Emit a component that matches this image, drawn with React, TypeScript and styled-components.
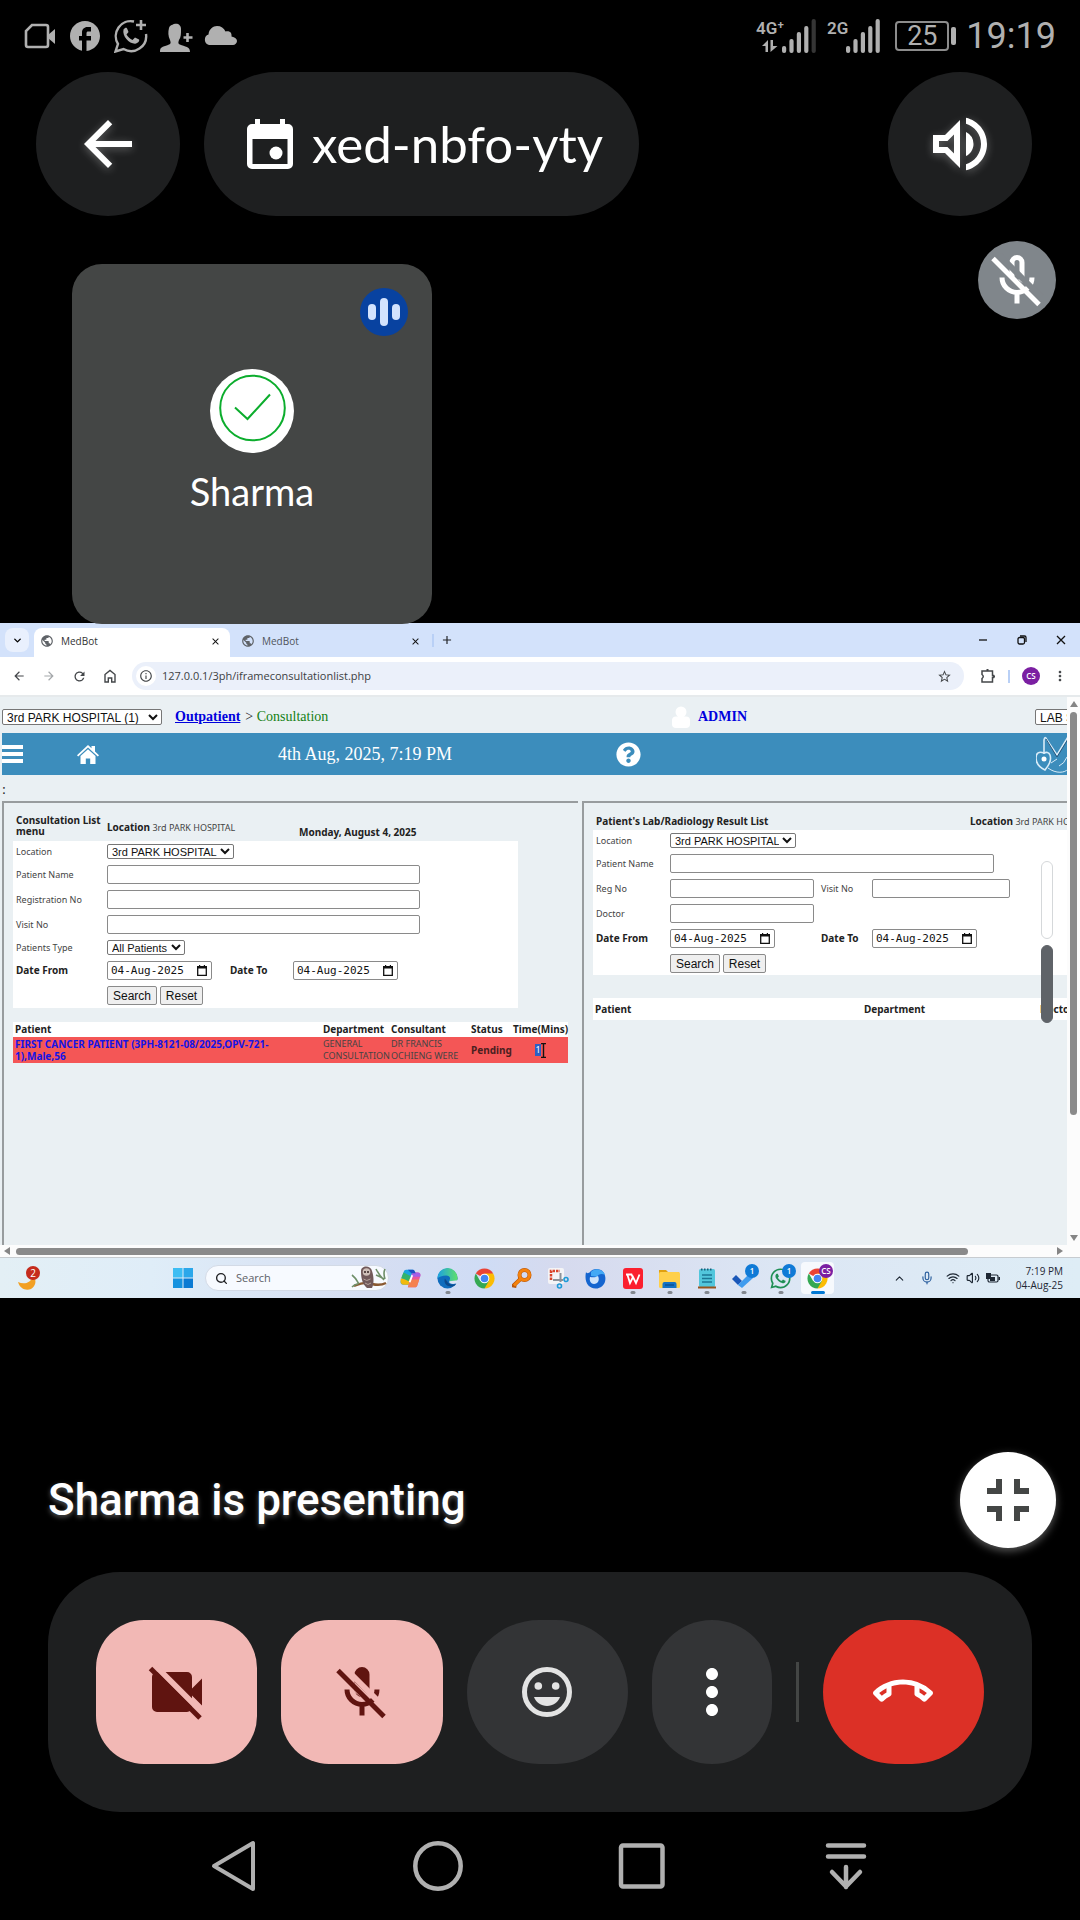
import React from "react";
import styled, { createGlobalStyle } from "styled-components";
import {
  MdArrowBack,
  MdOutlineVolumeUp,
  MdFullscreenExit,
  MdMoreVert,
  MdOutlineCallEnd,
  MdFacebook,
  MdPublic,
  MdClose,
  MdAdd,
  MdRefresh,
  MdArrowForward,
  MdInfoOutline,
  MdStarBorder,
} from "react-icons/md";
import { FaWhatsapp, FaQuestionCircle } from "react-icons/fa";
import { ChevronDown, ChevronUp, Mic, Wifi, Volume2, Search as SearchIcon } from "lucide-react";

const googleSans = `"Google Sans", Lato, "Open Sans", sans-serif`;
const segoe = `"Segoe UI", "Open Sans", "Noto Sans", sans-serif`;
const tahoma = `Tahoma, "Noto Sans", sans-serif`;
const arial = `"Liberation Sans", Arial, sans-serif`;
const times = `"Liberation Serif", "Times New Roman", serif`;

const GlobalStyle = createGlobalStyle`
  * { box-sizing: border-box; }
  body { margin: 0; background: #000; }
  button, input, select { font: inherit; margin: 0; }
  svg { display: block; flex: none; }
`;

const Phone = styled.main`
  min-height: 100vh;
  display: flex;
  flex-direction: column;
  background: #000;
  color: #fff;
  font-family: ${googleSans};
  overflow: hidden;
`;

/* ---------- status bar ---------- */

const StatusBar = styled.header`
  height: 72px;
  padding: 0 24px;
  display: flex;
  align-items: center;
  justify-content: space-between;
  color: #b0b0b0;
  font-family: Roboto, sans-serif;
`;

const StatusGroup = styled.div<{ $gap: number }>`
  display: flex;
  align-items: center;
  gap: ${(p) => p.$gap}px;
`;

const Battery = styled.span`
  width: 54px;
  height: 30px;
  margin-left: 4px;
  border: 2px solid #8c8c8c;
  border-radius: 4px;
  display: grid;
  place-items: center;
  font-size: 27px;
  line-height: 27px;
`;

const BatteryTip = styled.span`
  width: 5px;
  height: 18px;
  border-radius: 2px;
  background: #b0b0b0;
`;

const Clock = styled.time`
  font-size: 36px;
  line-height: 40px;
  margin-left: 8px;
`;

const SignalIcon = ({ label, data, bars }: { label: string; data?: boolean; bars: number }) => (
  <svg width={data ? 60 : 53} height="34" viewBox={data ? "0 0 60 34" : "0 0 53 34"} fill="currentColor">
    <text x="0" y="15" fontFamily="Roboto, sans-serif" fontWeight="600" fontSize="17">{label}</text>
    {[0, 1, 2, 3, 4].map((i) => {
      const h = [7, 14, 21, 27, 34][i];
      return (
        <rect key={i} x={(data ? 26 : 19) + i * 7.4} y={34 - h} width="4.2" height={h} rx="2" opacity={i < bars ? 1 : 0.3} />
      );
    })}
    {data && <path d="M6 27 12 21v12H9.500V27zM14.500 21v12l7-6h-4.500v-6z" />}
  </svg>
);

/* ---------- meeting header ---------- */

const MeetingHeader = styled.div`
  display: flex;
  gap: 24px;
  padding: 0 48px 0 36px;
`;

const RoundButton = styled.button`
  width: 144px;
  height: 144px;
  border: 0;
  border-radius: 72px;
  background: #1e1f20;
  color: #fff;
  display: grid;
  place-items: center;
  padding: 0;
  svg { filter: drop-shadow(0 2px 4px rgba(255, 255, 255, 0.3)); }
`;

const MeetingCode = styled.button`
  height: 144px;
  padding: 0 36px;
  border: 0;
  border-radius: 72px;
  background: #1e1f20;
  color: #fff;
  display: flex;
  align-items: center;
  gap: 12px;
  font-size: 51px;
  line-height: 56px;
`;

const Grow = styled.div`
  flex: 1;
`;

/* ---------- participants ---------- */

const Participants = styled.section`
  display: flex;
  justify-content: space-between;
  align-items: flex-start;
  padding: 25px 24px 0 72px;
`;

const Tile = styled.article`
  position: relative;
  z-index: 1;
  width: 360px;
  height: 360px;
  margin: 23px 0 -1px;
  border-radius: 30px;
  background: #444645;
  display: flex;
  flex-direction: column;
  align-items: center;
  padding-top: 105px;
`;

const SpeakingBadge = styled.span`
  position: absolute;
  top: 24px;
  right: 24px;
  width: 48px;
  height: 48px;
  border-radius: 50%;
  background: #0842a0;
  display: flex;
  align-items: center;
  justify-content: center;
  gap: 4px;
`;

const SpeakingBar = styled.i<{ $tall?: boolean }>`
  width: 8px;
  height: ${(p) => (p.$tall ? 28 : 16)}px;
  border-radius: 4px;
  background: #d3e3fd;
`;

const TileName = styled.span`
  margin-top: 16px;
  font-size: 38px;
  line-height: 44px;
`;

const MutedBadge = styled.span`
  width: 78px;
  height: 78px;
  border-radius: 50%;
  background: #80868b;
  display: grid;
  place-items: center;
`;

/* ---------- shared desktop ---------- */

const Desktop = styled.section`
  position: relative;
  background: #fff;
  color: #202124;
  font-family: ${segoe};
`;

const TabStrip = styled.div`
  height: 34px;
  padding: 5px 14px 0 5px;
  background: #d3e2fb;
  display: flex;
  align-items: stretch;
`;

const TabSearch = styled.button`
  width: 24px;
  height: 24px;
  border: 0;
  border-radius: 8px;
  background: #e9f0fd;
  padding: 0;
  margin-right: 5px;
  display: grid;
  place-items: center;
`;

const Tab = styled.div<{ $active?: boolean }>`
  width: ${(p) => (p.$active ? 196 : 200)}px;
  padding: 0 9px 3px ${(p) => (p.$active ? 6 : 11)}px;
  border-radius: 8px 8px 0 0;
  background: ${(p) => (p.$active ? "#fff" : "transparent")};
  color: ${(p) => (p.$active ? "#333" : "#50555c")};
  display: flex;
  align-items: center;
  gap: 7px;
  font-size: 10px;
  line-height: 14px;
`;

const TabTitle = styled.span`
  flex: 1;
`;

const PlainButton = styled.button`
  border: 0;
  background: none;
  color: inherit;
  padding: 0;
  display: grid;
  place-items: center;
`;

const Separator = styled.i<{ $m: number }>`
  width: 2px;
  height: 13px;
  margin: 0 ${(p) => p.$m}px;
  align-self: center;
  background: #b9d0f6;
`;

const WindowButtons = styled.div`
  display: flex;
  align-items: center;
  gap: 29px;
  margin-left: auto;
  padding-bottom: 6px;
`;

const TabActions = styled.div`
  display: flex;
  align-items: center;
  gap: 6px;
  padding: 0 0 5px 2px;
`;

const Toolbar = styled.div`
  height: 40px;
  padding: 0 12px;
  display: flex;
  align-items: center;
  border-bottom: 2px solid #e6eaec;
  color: #44474a;
`;

const NavButtons = styled.div`
  display: flex;
  gap: 16px;
  margin-right: 15px;
`;

const Omnibox = styled.div`
  flex: 1;
  height: 28px;
  border-radius: 14px;
  background: #ebf0fa;
  display: flex;
  align-items: center;
  padding: 0 12px 0 4px;
  gap: 6px;
`;

const SiteInfo = styled.span`
  width: 20px;
  height: 20px;
  border-radius: 50%;
  background: #fff;
  display: grid;
  place-items: center;
`;

const UrlInput = styled.input`
  flex: 1;
  min-width: 0;
  border: 0;
  padding: 0;
  background: none;
  font-size: 11px;
  line-height: 16px;
  color: #3c4043;
`;

const ToolbarEnd = styled.div`
  display: flex;
  align-items: center;
  padding-left: 16px;
`;

const Profile = styled.span`
  width: 18px;
  height: 18px;
  border-radius: 50%;
  background: #7b1fa2;
  color: #fff;
  display: grid;
  place-items: center;
  font-size: 8px;
  line-height: 8px;
  font-weight: 600;
  margin-right: 12px;
`;

/* ---------- hospital page ---------- */

const Viewport = styled.div`
  display: flex;
  height: 548px;
`;

const Page = styled.div`
  flex: 1;
  min-width: 0;
  overflow: hidden;
  background: #eaf0f3;
  padding-left: 2px;
  display: flex;
  flex-direction: column;
`;

const PageTop = styled.div`
  height: 36px;
  padding-top: 4px;
  display: flex;
  align-items: center;
  font-family: ${times};
  font-size: 14px;
  line-height: 16px;
  white-space: nowrap;
  a { color: #00d; font-weight: 700; }
`;

const Crumb = styled.span`
  color: #148014;
`;

const BarStart = styled.div<{ $w: number }>`
  flex: 0 0 ${(p) => p.$w}px;
  display: flex;
  align-items: center;
`;

const Spacer = styled.i<{ $w: number }>`
  width: ${(p) => p.$w}px;
  flex: none;
`;

const AdminLink = styled.a`
  width: 337px;
  flex: none;
  text-decoration: none;
`;

const LogoSlot = styled.span`
  flex: none;
  padding-left: 395px;
`;

const Field = styled.select<{ $w: number; $large?: boolean }>`
  width: ${(p) => p.$w}px;
  flex: none;
  height: ${(p) => (p.$large ? 16 : 15)}px;
  border: 1px solid #767676;
  border-radius: 2px;
  background: #fff;
  color: #111;
  padding: 0;
  font-family: ${arial};
  font-size: ${(p) => (p.$large ? 12 : 11)}px;
  line-height: 13px;
`;

const BlueBar = styled.nav`
  height: 42px;
  background: #3c8dbc;
  color: #fff;
  display: flex;
  align-items: center;
  font-family: ${times};
  font-size: 18px;
  line-height: 20px;
  overflow: hidden;
`;

const BarDate = styled.span`
  margin-left: 179px;
  white-space: nowrap;
`;

const Burger = styled.button`
  width: 21px;
  height: 18px;
  padding: 0;
  border: 0;
  border-top: 4px solid #fff;
  border-bottom: 4px solid #fff;
  background: linear-gradient(#fff, #fff) center / 100% 4px no-repeat;
  margin-right: 54px;
`;

const Colon = styled.p`
  margin: 0;
  height: 26px;
  padding-top: 7px;
  font: 14px/16px ${times};
`;

const Frames = styled.div`
  flex: 1;
  display: flex;
  gap: 4px;
  min-height: 0;
`;

const Frame = styled.section<{ $basis: string }>`
  flex: ${(p) => p.$basis};
  min-width: 0;
  overflow: hidden;
  border-top: 2px solid #989c9e;
  border-left: 2px solid #989c9e;
  padding-left: 9px;
  font-family: ${tahoma};
  font-size: 9px;
  line-height: 11px;
  color: #444;
  b, th { font-size: 10px; color: #222; }
`;

const FrameHead = styled.div<{ $h: number }>`
  height: ${(p) => p.$h}px;
  display: flex;
  align-items: flex-end;
  padding: 0 0 2px 3px;
  white-space: nowrap;
`;

const HeadCell = styled.div<{ $w?: number; $lift?: number }>`
  width: ${(p) => (p.$w ? p.$w + "px" : "auto")};
  flex: none;
  padding-bottom: ${(p) => p.$lift ?? 0}px;
`;

const Form = styled.form<{ $cols: string; $maxed?: boolean }>`
  background: #fff;
  display: grid;
  grid-template-columns: ${(p) => p.$cols};
  gap: 6px 0;
  align-items: center;
  padding: 3px 0 ${(p) => (p.$maxed ? 3 : 2)}px 3px;
  margin-right: ${(p) => (p.$maxed ? 60 : 0)}px;
`;

const Label = styled.label<{ $bold?: boolean }>`
  font-weight: ${(p) => (p.$bold ? 700 : 400)};
  font-size: ${(p) => (p.$bold ? 10 : 9)}px;
  color: ${(p) => (p.$bold ? "#222" : "#444")};
  white-space: nowrap;
`;

const Text = styled.input<{ $w: number; $span?: boolean }>`
  width: ${(p) => p.$w}px;
  height: 19px;
  border: 1px solid #8a8a8a;
  border-radius: 2px;
  background: #fff;
  padding: 0 4px;
  grid-column: ${(p) => (p.$span ? "2 / -1" : "auto")};
`;

const SelectCell = styled.div`
  grid-column: 2 / -1;
  display: flex;
  gap: 3px;
`;

const DateBox = styled.span`
  width: 105px;
  height: 19px;
  border: 1px solid #8a8a8a;
  border-radius: 2px;
  background: #fff;
  display: flex;
  align-items: center;
  padding: 0 4px 0 3px;
  color: #111;
`;

const DateInput = styled.input`
  flex: 1;
  min-width: 0;
  border: 0;
  padding: 0;
  background: none;
  font-family: "DejaVu Sans Mono", monospace;
  font-size: 11px;
  line-height: 15px;
  color: #111;
`;

const FormButton = styled.button<{ $w: number }>`
  width: ${(p) => p.$w}px;
  height: 19px;
  border: 1px solid #8a8a8a;
  border-radius: 2px;
  background: #efefef;
  color: #111;
  padding: 0;
  font-family: ${arial};
  font-size: 12px;
  line-height: 16px;
`;

const DataTable = styled.table<{ $w: string; $top: number; $head: number }>`
  width: ${(p) => p.$w};
  margin-top: ${(p) => p.$top}px;
  border-collapse: collapse;
  table-layout: fixed;
  text-align: left;
  white-space: nowrap;
  th, td { padding: 0 0 0 2px; }
  thead tr { height: ${(p) => p.$head}px; background: #fff; }
`;

const PatientRow = styled.tr`
  height: 26px;
  background: #f45656;
  line-height: 12px;
  b { color: #4a2020; }
`;

const PatientCell = styled.td`
  font-weight: 700;
  font-size: 10px;
  a { color: #1414e6; text-decoration: none; }
`;

const Minutes = styled.div`
  display: flex;
  justify-content: center;
  align-items: center;
  span { background: #2c5fc4; color: #fff; }
`;

const VerticalScroll = styled.div`
  width: 13px;
  background: #fcfcfc;
  display: flex;
  flex-direction: column;
  align-items: center;
  padding: 3px 0;
`;

const VerticalThumb = styled.div`
  width: 7px;
  height: 403px;
  margin: 4px 0 auto;
  border-radius: 4px;
  background: #8a8a8a;
`;

const HorizontalScroll = styled.div`
  height: 13px;
  display: flex;
  align-items: center;
  padding: 0 16px 0 3px;
  border-bottom: 1px solid #c7ccd0;
  background: #fcfcfc;
`;

const HorizontalTrack = styled.div`
  flex: 1;
  margin: 0 0 0 5px;
`;

const HorizontalThumb = styled.div`
  width: 91.5%;
  height: 7px;
  border-radius: 4px;
  background: #8a8a8a;
`;

const SideSliders = styled.div`
  position: absolute;
  top: 238px;
  right: 27px;
  display: grid;
  gap: 6px;
`;

const SidePill = styled.i<{ $filled?: boolean }>`
  width: 12px;
  height: 78px;
  border-radius: 6px;
  border: 1px solid ${(p) => (p.$filled ? "#5f6368" : "#d5d8da")};
  background: ${(p) => (p.$filled ? "#5f6368" : "#fff")};
`;

/* ---------- taskbar ---------- */

const Taskbar = styled.footer`
  height: 40px;
  display: flex;
  align-items: center;
  padding: 0 17px;
  background: linear-gradient(90deg, #e3eff5 0%, #dfedf8 14%, #d6def2 34%, #cfdcf5 45%, #d6daee 52%, #dce6f4 72%, #deedf6 100%);
`;

const Weather = styled.div`
  flex: 0 0 156px;
`;

const StartButton = styled(PlainButton)`
  width: 20px;
  height: 20px;
  margin-right: 12px;
`;

const SearchBox = styled.label`
  width: 184px;
  height: 26px;
  border: 1px solid #d3dae6;
  border-radius: 13px;
  background: #f7faff;
  display: flex;
  align-items: center;
  gap: 8px;
  padding: 0 1px 0 9px;
  input {
    flex: 1;
    min-width: 0;
    border: 0;
    padding: 0;
    background: none;
    font-size: 11px;
    line-height: 16px;
    &::placeholder { color: #5c6066; opacity: 1; }
  }
`;

const Apps = styled.div`
  display: flex;
  padding-left: 3px;
`;

const AppButton = styled.button<{ $active?: boolean; $running?: boolean }>`
  position: relative;
  width: 33px;
  margin: 0 2px;
  height: 32px;
  padding: 0;
  border: 0;
  border-radius: 4px;
  background: ${(p) => (p.$active ? "#f6f9fd" : "none")};
  display: grid;
  place-items: center;
  &::after {
    content: "";
    position: absolute;
    bottom: 0;
    left: 50%;
    width: ${(p) => (p.$active ? 14 : 5)}px;
    height: 3px;
    border-radius: 2px;
    transform: translateX(-50%);
    background: ${(p) => (p.$active ? "#0078d4" : p.$running ? "#82878f" : "transparent")};
  }
`;

const Count = styled.span<{ $color: string }>`
  position: absolute;
  top: 2px;
  right: 1px;
  width: 14px;
  height: 14px;
  border-radius: 50%;
  background: ${(p) => p.$color};
  color: #fff;
  display: grid;
  place-items: center;
  font-size: 8px;
  line-height: 10px;
  font-weight: 600;
`;

const Tray = styled.div`
  flex: 1 1 0;
  display: flex;
  justify-content: flex-end;
  align-items: center;
  color: #1d2733;
`;

const TrayIcons = styled.div`
  display: flex;
  align-items: center;
  gap: 6px;
  margin: 0 16px 0 14px;
`;

const TrayTime = styled.div`
  width: 47px;
  text-align: right;
  white-space: nowrap;
  font-size: 10px;
  line-height: 14px;
  display: grid;
  justify-content: end;
`;

/* ---------- call controls ---------- */

const Presenting = styled.div`
  display: flex;
  align-items: center;
  justify-content: space-between;
  margin: 154px 24px 24px 48px;
  font-family: Roboto, sans-serif;
  font-size: 44px;
  line-height: 52px;
  font-weight: 500;
  text-shadow: 0 2px 5px rgba(255, 255, 255, 0.35);
`;

const Minimise = styled.button`
  width: 96px;
  height: 96px;
  border: 0;
  border-radius: 50%;
  padding: 0;
  background: #fff;
  color: #444645;
  display: grid;
  place-items: center;
  box-shadow: 0 3px 8px rgba(255, 255, 255, 0.35);
`;

const Controls = styled.div`
  height: 240px;
  margin: 0 48px;
  padding: 48px;
  border-radius: 72px;
  background: #1e1f20;
  display: flex;
  align-items: center;
  gap: 24px;
`;

const Control = styled.button<{ $bg: string; $fg: string; $r: number; $w?: number }>`
  flex: ${(p) => (p.$w ? `0 0 ${p.$w}px` : "1 1 0")};
  height: 144px;
  padding: 0;
  border: 0;
  border-radius: ${(p) => p.$r}px;
  background: ${(p) => p.$bg};
  color: ${(p) => p.$fg};
  display: grid;
  place-items: center;
`;

const Rule = styled.i`
  width: 3px;
  height: 60px;
  background: #444645;
`;

const SystemNav = styled.nav`
  height: 108px;
  display: flex;
  justify-content: center;
  align-items: center;
`;

const SystemButton = styled(PlainButton)`
  width: 204px;
  height: 72px;
`;

/* ---------- drawings ---------- */

const CalendarIcon = () => (
  <svg width="60" height="60" viewBox="0 0 60 60" fill="#fff">
    <path
      fillRule="evenodd"
      d="M15 5h5v5h20V5h5v5h3a5 5 0 0 1 5 5v35a5 5 0 0 1-5 5H12a5 5 0 0 1-5-5V15a5 5 0 0 1 5-5h3zM12.500 25v25h35V25z"
    />
    <circle cx="36" cy="39" r="6.500" />
  </svg>
);

const CheckAvatar = () => (
  <svg width="84" height="84" viewBox="0 0 84 84">
    <circle cx="42" cy="42" r="42" fill="#fff" />
    <g fill="none" stroke="#0cad2d" strokeWidth="2">
      <circle cx="42.500" cy="39" r="32.300" />
      <path d="M25 38.500 37.500 50 60 25.500" />
    </g>
  </svg>
);

const MicOff = ({ filled, gap }: { filled?: boolean; gap: string }) => (
  <svg width="60" height="60" viewBox="0 0 60 60" fill="none" stroke="currentColor" strokeWidth="5">
    {filled ? (
      <path d="M22.500 12.500a7.500 7.500 0 0 1 15 0v15a7.500 7.500 0 0 1-15 0z" fill="currentColor" stroke="none" />
    ) : (
      <path d="M25 12.500a5 5 0 0 1 10 0v15a5 5 0 0 1-10 0z" />
    )}
    <path d="M15 27.500a15 15 0 0 0 30 0M30 42.500v11" />
    {filled ? (
      <path d="M22.500 20v10l10 8 5-4z" fill={gap} stroke="none" />
    ) : (
      <path d="M21 22v12l12 5 4-5z" fill={gap} stroke="none" />
    )}
    <path d="M12 5 54 47" stroke={gap} strokeWidth="6" />
    <path d="M6 8.500 52 54.500" />
  </svg>
);

const CameraOff = ({ gap }: { gap: string }) => (
  <svg width="60" height="60" viewBox="0 0 60 60">
    <path d="M10 10h30a5 5 0 0 1 5 5v11.500L55 16.500v27l-10-10V45a5 5 0 0 1-5 5H10a5 5 0 0 1-5-5V15a5 5 0 0 1 5-5z" fill="currentColor" />
    <path d="M8 3.500 60 55.500" stroke={gap} strokeWidth="6" />
    <path d="M3.500 6.500 53 56" stroke="currentColor" strokeWidth="5" />
  </svg>
);

const Smile = () => (
  <svg width="60" height="60" viewBox="0 0 60 60" fill="currentColor">
    <circle cx="30" cy="30" r="22.500" fill="none" stroke="currentColor" strokeWidth="5" />
    <circle cx="21.300" cy="24" r="3.800" />
    <circle cx="38.700" cy="24" r="3.800" />
    <path d="M17 35h26c-2 5.500-7 9-13 9s-11-3.500-13-9z" />
  </svg>
);

const StatusCamera = () => (
  <svg width="32" height="32" viewBox="0 0 32 32">
    <path d="M8 5h14a2 2 0 0 1 2 2v18a2 2 0 0 1-2 2H4a2 2 0 0 1-2-2V11z" fill="none" stroke="currentColor" strokeWidth="2.600" />
    <path d="m24 15 7-6v15l-7-6z" fill="currentColor" />
  </svg>
);

const StatusWhatsapp = () => (
  <svg width="34" height="34" viewBox="0 0 34 34" fill="none" stroke="currentColor" strokeWidth="2.400">
    <path d="M20 2.500A15 15 0 0 0 4 25L1.500 32.500 9.500 30A15 15 0 0 0 32 15" />
    <path d="M27 1v10M22 6h10" strokeWidth="2.600" />
    <path d="M9.500 10.500c2-2.500 3.500-2 4 0l1 2.500-2 2.500c1.500 2.500 3.500 4.500 6 5.500l2.500-2.500 4 2c1 1-1 4-4 4.200-6 0-13-7.500-11.500-14.200z" fill="currentColor" stroke="none" />
  </svg>
);

const StatusPerson = () => (
  <svg width="34" height="34" viewBox="0 0 34 34" fill="currentColor">
    <path d="M1 33c0-5 2-5 8-7 3-1 3-2 2-5-2-4-2-8-1-12 1-3 3-3 5-4 4-1 7 1 7 5 0 5 0 8-2 11-1 3-1 4 2 5 7 2 9 3 9 7z" />
    <path d="M28.500 14v9M24.500 18.500h9" stroke="currentColor" strokeWidth="2.600" />
  </svg>
);

const StatusCloud = () => (
  <svg width="34" height="34" viewBox="0 0 34 34" fill="currentColor">
    <path d="M5 26a5.500 5.500 0 0 1-.500-10.500C5 10 9 7 13 7c4 0 7 2 8.500 5.500C26 11.500 28 14 27.500 17.500 31 18 33 20 33 22s-2 4-4 4z" />
  </svg>
);

const HouseIcon = () => (
  <svg width="22" height="19" viewBox="0 0 22 19" fill="#fff">
    <path d="M11 0 14.500 3.300V1H18v5.500l4 3.700-1.200 1.300L11 2.600 1.200 11.500 0 10.200z" />
    <path d="M11 4.300 18.500 11v8h-5.300v-5.500H8.800V19H3.500v-8z" />
  </svg>
);

const PersonIcon = () => (
  <svg width="18" height="22" viewBox="0 0 18 22" fill="#fff">
    <circle cx="9" cy="6" r="5.500" />
    <rect y="10.500" width="18" height="11.500" rx="4" />
  </svg>
);

const StethoscopeLogo = () => (
  <svg width="60" height="38" viewBox="0 0 60 38" fill="none" stroke="#d9ecf8" strokeWidth="1.600">
    <path d="M8 19V5q1-5 3 0l10 15L32 2q2-2 3 1v18" />
    <path d="M8 18c-5-2-8 0-8 5 0 6 5 10 9 12 3-4 7-9 5-15-1-3-4-3-6-2z" />
    <path d="M12 33c8 6 17 5 20 1M15 28l6-4M31 22q-3 7-8 9" strokeWidth="1" />
    <circle cx="8" cy="24" r="2.500" fill="#fff" stroke="none" />
    <path d="M10 4 21 22 32 4" stroke="#27567c" strokeWidth="1" />
  </svg>
);

const Globe = () => <MdPublic size={14} color="#5f6368" />;

const ChromeLogo = () => (
  <svg width="21" height="21" viewBox="0 0 48 48">
    <path d="M24 24 4.100 12.500A23 23 0 0 1 43.900 12.500z" fill="#ea4335" />
    <path d="M24 24V12.500h19.900A23 23 0 0 1 24 47z" fill="#fbbc04" />
    <path d="M24 24 34 29.700 24 47A23 23 0 0 1 4.100 12.500L14 29.700z" fill="#34a853" />
    <circle cx="24" cy="24" r="11" fill="#fff" />
    <circle cx="24" cy="24" r="8.700" fill="#4285f4" />
  </svg>
);

const EdgeLogo = () => (
  <svg width="21" height="21" viewBox="0 0 24 24">
    <defs>
      <linearGradient id="edgeTop" x1="0" x2="1">
        <stop offset="0" stopColor="#1ba0e2" />
        <stop offset="1" stopColor="#5fe06a" />
      </linearGradient>
    </defs>
    <circle cx="12" cy="12" r="11.500" fill="#0f6cbd" />
    <path d="M.500 12A11.500 11.500 0 0 1 23.500 11c0 4-3 5.500-6 5.500-3 0-4-1.500-3-3 1.500-3-1-5-4-5C6 8.500 2 10 .500 12z" fill="url(#edgeTop)" />
    <path d="M9 12c-2 6 3 10 9 9 2-.500 3.500-2 4-3-4 2-9 1-10.500-3z" fill="#0b4a8c" />
    <path d="M14 15c-1 3 4 4 8.500 2.500L24 14z" fill="#dbe4f4" />
  </svg>
);

const CopilotLogo = () => (
  <svg width="21" height="21" viewBox="0 0 24 24">
    <path d="M7 2h8l-5 17H4c-3 0-4-2-3-5L4 5c.500-2 1.500-3 3-3z" fill="#1aa3e0" />
    <path d="M1 12h11l-2 7H4c-3 0-4-3-3-7z" fill="#f2b90c" />
    <path d="M1.500 11 4 5l8 4-2 6z" fill="#33b36b" />
    <path d="M14 5h6c3 0 4 2 3 5l-3 9c-.500 2-1.500 3-3 3H9z" fill="#e9569c" />
    <path d="M9 22 12 13h10l-2 6c-.500 2-1.500 3-3 3z" fill="#f5824f" />
    <path d="M14 5h6c3 0 4 2 3 5h-10z" fill="#a45ee6" />
    <path d="M9 2h6c2 0 2 3 3 4h-5z" fill="#1c4fc4" />
    <path d="m13 8-3 8 2 .500 3-8z" fill="#fff" />
  </svg>
);

const KeyLogo = () => (
  <svg width="20" height="20" viewBox="0 0 20 20" fill="none">
    <path d="M9 10.500 1.500 17.500l3 .500" stroke="#b9560a" strokeWidth="4" />
    <circle cx="12.500" cy="7" r="5" stroke="#b9560a" strokeWidth="4" />
    <path d="M9 10.500 2 17.500" stroke="#f5820c" strokeWidth="3" />
    <circle cx="12.500" cy="7" r="5" stroke="#f5820c" strokeWidth="3" />
  </svg>
);

const SnipLogo = () => (
  <svg width="21" height="21" viewBox="0 0 21 21" fill="none">
    <rect width="16" height="16" rx="2" fill="#f4f4f6" />
    <path d="M3 12V3h9" stroke="#d9442a" strokeWidth="2.500" strokeDasharray="2.500 1" />
    <path d="M12.500 5v9M5 12h10" stroke="#8d9299" strokeWidth="2" />
    <circle cx="11.500" cy="18" r="2" stroke="#1d9bd8" strokeWidth="1.600" />
    <circle cx="18" cy="11.500" r="2" stroke="#1d9bd8" strokeWidth="1.600" />
  </svg>
);

const BirdLogo = () => (
  <svg width="21" height="21" viewBox="0 0 21 21">
    <path d="M1 4c1 2 3 1 4 0 3-4 11-4 14 1 4 8-1 15.500-8.500 15.500S-1 14 1 4z" fill="#1565cf" />
    <path d="M6 4c4-5 12-3 14 3-3-2-7-1-8 2-1 0-3-1-6-1z" fill="#43a9f5" />
    <path d="M5 9c2 0 5 1 8-1 2 4 0 8-4 8-3 0-5-3-4-7z" fill="#cfe4fb" />
  </svg>
);

const WpsLogo = () => (
  <svg width="20" height="21" viewBox="0 0 20 21">
    <rect width="20" height="21" rx="3" fill="#fb1f2e" />
    <path d="M3 6.500h5.500L10 10M4.500 7 7 15l3-6 3 6 3.500-8.500" fill="none" stroke="#fff" strokeWidth="1.800" />
  </svg>
);

const FolderLogo = () => (
  <svg width="21" height="21" viewBox="0 0 21 21">
    <path d="M0 2h7l2 2h11v4H0z" fill="#e0a010" />
    <rect y="4" width="21" height="16" rx="1.500" fill="#ffd04c" />
    <path d="M3.500 20v-4q0-2 2-2h10q2 0 2 2v4z" fill="#1372c4" />
    <path d="M6 17h9" stroke="#0b4f91" strokeWidth="1.400" />
  </svg>
);

const NotepadLogo = () => (
  <svg width="18" height="21" viewBox="0 0 18 21">
    <rect x="1" y="1" width="16" height="18" rx="1.500" fill="#52c6dc" />
    <path d="M3 1.500h12" stroke="#1b5d78" strokeWidth="2" strokeDasharray="1.500 1.500" />
    <path d="M4 7h10M4 10.500h10M4 14h10" stroke="#1c7795" strokeWidth="1.400" />
    <rect y="18.500" width="18" height="2" fill="#97551f" />
  </svg>
);

const TodoLogo = () => (
  <svg width="24" height="21" viewBox="0 0 24 21">
    <path d="m0 11 4-4 6 6-4 4z" fill="#1a57b8" />
    <path d="m6 17 11-11 4 4L10 20z" fill="#3f9bee" />
  </svg>
);

const MoonLogo = () => (
  <svg width="24" height="26" viewBox="0 0 24 26">
    <path d="M1 17c6 3 13 1 15-6 4 4 3 10-2 13-5 2-11 0-13-7z" fill="#f2a024" />
    <circle cx="16" cy="8" r="7" fill="#c52b1c" />
    <text x="16" y="11.500" textAnchor="middle" fontSize="10" fill="#fff" fontFamily="Open Sans, sans-serif">2</text>
  </svg>
);

const WindowsLogo = () => (
  <svg width="20" height="20" viewBox="0 0 20 20">
    <path d="M0 0h9.500v9.500H0z" fill="#3dbdf3" />
    <path d="M10.500 0H20v9.500h-9.500z" fill="#2ba7ea" />
    <path d="M0 10.500h9.500V20H0z" fill="#1592df" />
    <path d="M10.500 10.500H20V20h-9.500z" fill="#0a7ad3" />
  </svg>
);

const OwlDrawing = () => (
  <svg width="36" height="24" viewBox="0 0 36 24">
    <path d="M3 20q12-5 18-2 8 2 14-1" stroke="#8a5a32" strokeWidth="2.400" fill="none" />
    <path d="M1 9q4 3 7 9M1 21q3-3 6-3M25 3q3 6 8 11M34 3q-2 4 0 10M25 9q5 2 8 4" stroke="#6f8f69" strokeWidth="1.600" fill="none" />
    <path d="M10 5c0-6 10-6 11 0 2 6 2 12 0 17h-5c-5-4-6-11-6-17z" fill="#71595a" />
    <circle cx="15.500" cy="6" r="3.800" fill="#cfbfb8" />
    <circle cx="14" cy="6" r="1" fill="#332222" />
    <circle cx="17" cy="6" r="1" fill="#332222" />
    <path d="M12.500 13q3 3 7 0M14 17q3 3 6 0" stroke="#b7a39c" fill="none" />
  </svg>
);

const BatteryDrawing = () => (
  <svg width="14" height="10" viewBox="0 0 14 10">
    <rect x="2" y="2" width="10" height="7" rx="1.500" fill="none" stroke="#1d2733" strokeWidth="1.200" />
    <path d="M0 0h5v6H0zM4 4h5v4H4zM12.500 4H14v3h-1.500z" fill="#1d2733" />
  </svg>
);

const DateField = ({ id }: { id: string }) => (
  <DateBox>
    <DateInput id={id} defaultValue="04-Aug-2025" />
    <svg width="10" height="11" viewBox="0 0 10 11">
      <path d="M.700 2h8.600v8.300H.700z" fill="none" stroke="#111" strokeWidth="1.300" />
      <path d="M0 1h10v2.500H0zM2 0h1.200v2H2zM6.800 0H8v2H6.800z" fill="#111" />
    </svg>
  </DateBox>
);

const Arrow = ({ d }: { d: string }) => (
  <svg width="8" height="8" viewBox="0 0 8 8" fill="#858585">
    <path d={d} />
  </svg>
);

const PINK = "#f2b8b5";

export default function App() {
  return (
    <>
      <GlobalStyle />
      <Phone>
        <StatusBar>
          <StatusGroup $gap={11}>
            <StatusCamera />
            <MdFacebook size={36} />
            <StatusWhatsapp />
            <StatusPerson />
            <StatusCloud />
          </StatusGroup>
          <StatusGroup $gap={2}>
            <StatusGroup $gap={11}>
              <SignalIcon label="4G⁺" data bars={4} />
              <SignalIcon label="2G" bars={5} />
              <StatusGroup $gap={2}>
                <Battery>25</Battery>
                <BatteryTip />
              </StatusGroup>
            </StatusGroup>
            <Clock>19:19</Clock>
          </StatusGroup>
        </StatusBar>

        <MeetingHeader>
          <RoundButton aria-label="Back"><MdArrowBack size={72} /></RoundButton>
          <MeetingCode><CalendarIcon />xed-nbfo-yty</MeetingCode>
          <Grow />
          <RoundButton aria-label="Speaker"><MdOutlineVolumeUp size={72} /></RoundButton>
        </MeetingHeader>

        <Participants>
          <Tile>
            <SpeakingBadge>
              <SpeakingBar />
              <SpeakingBar $tall />
              <SpeakingBar />
            </SpeakingBadge>
            <CheckAvatar />
            <TileName>Sharma</TileName>
          </Tile>
          <MutedBadge><MicOff gap="#80868b" /></MutedBadge>
        </Participants>

        <Desktop>
          <TabStrip>
            <TabSearch aria-label="Search tabs"><ChevronDown size={11} strokeWidth={3} /></TabSearch>
            <Tab $active>
              <Globe />
              <TabTitle>MedBot</TabTitle>
              <PlainButton aria-label="Close tab"><MdClose size={11} color="#111" /></PlainButton>
            </Tab>
            <Tab>
              <Globe />
              <TabTitle>MedBot</TabTitle>
              <PlainButton aria-label="Close tab"><MdClose size={11} color="#111" /></PlainButton>
            </Tab>
            <TabActions>
              <Separator $m={0} />
              <PlainButton aria-label="New tab"><MdAdd size={14} /></PlainButton>
            </TabActions>
            <WindowButtons>
              <PlainButton aria-label="Minimise">
                <svg width="10" height="10"><path d="M1 5h8" stroke="#111" strokeWidth="1.300" /></svg>
              </PlainButton>
              <PlainButton aria-label="Restore">
                <svg width="10" height="10" fill="none" stroke="#111" strokeWidth="1.300">
                  <rect x="1" y="2.500" width="6.500" height="6.500" rx="1.500" />
                  <path d="M3 1h4.500Q9 1 9 2.500V7" />
                </svg>
              </PlainButton>
              <PlainButton aria-label="Close">
                <svg width="10" height="10"><path d="m1 1 8 8M9 1 1 9" stroke="#111" strokeWidth="1.300" /></svg>
              </PlainButton>
            </WindowButtons>
          </TabStrip>

          <Toolbar>
            <NavButtons>
              <PlainButton aria-label="Back"><MdArrowBack size={14} /></PlainButton>
              <PlainButton aria-label="Forward"><MdArrowForward size={14} color="#a4a7aa" /></PlainButton>
              <PlainButton aria-label="Reload"><MdRefresh size={15} /></PlainButton>
              <PlainButton aria-label="Home">
                <svg width="14" height="14" viewBox="0 0 14 14" fill="none" stroke="currentColor" strokeWidth="1.400">
                  <path d="M2 5.500 7 1.500l5 4V13H8.700V9H5.300v4H2z" />
                </svg>
              </PlainButton>
            </NavButtons>
            <Omnibox>
              <SiteInfo><MdInfoOutline size={14} /></SiteInfo>
              <UrlInput aria-label="Address" defaultValue="127.0.0.1/3ph/iframeconsultationlist.php" />
              <MdStarBorder size={15} />
            </Omnibox>
            <ToolbarEnd>
              <svg width="16" height="16" viewBox="0 0 16 16" fill="none" stroke="currentColor" strokeWidth="1.500">
                <path d="M2 3h10.500v4.500h1v2h-1V14H2v-3.500q2.500-2 0-4z" />
                <path d="M6.500 2h2M14 7.500v2" strokeWidth="2" />
              </svg>
              <Separator $m={12} />
              <Profile>CS</Profile>
              <MdMoreVert size={16} />
            </ToolbarEnd>
          </Toolbar>

          <Viewport>
            <Page>
              <PageTop>
                <BarStart $w={670}>
                  <Field $w={160} $large aria-label="Hospital"><option>3rd PARK HOSPITAL (1)</option></Field>
                  <Spacer $w={13} />
                  <a href="#outpatient">Outpatient</a>
                  <Spacer $w={5} />
                  <span>&gt;&nbsp;</span>
                  <Crumb>Consultation</Crumb>
                </BarStart>
                <PersonIcon />
                <Spacer $w={8} />
                <AdminLink href="#admin">ADMIN</AdminLink>
                <Field $w={120} $large aria-label="Department"><option>LAB SERVICES</option></Field>
              </PageTop>

              <BlueBar>
                <BarStart $w={614}>
                  <Burger aria-label="Menu" />
                  <HouseIcon />
                  <BarDate>4th Aug, 2025, 7:19 PM</BarDate>
                </BarStart>
                <FaQuestionCircle size={25} />
                <LogoSlot><StethoscopeLogo /></LogoSlot>
              </BlueBar>
              <Colon>:</Colon>

              <Frames>
                <Frame $basis="0 0 576px">
                  <FrameHead $h={38}>
                    <HeadCell $w={91} $lift={2}><b>Consultation List<br />menu</b></HeadCell>
                    <HeadCell $w={192} $lift={6}><b>Location</b> 3rd PARK HOSPITAL</HeadCell>
                    <HeadCell $lift={1}><b>Monday, August 4, 2025</b></HeadCell>
                  </FrameHead>
                  <Form $cols="91px 123px 63px 1fr" $maxed onSubmit={(e) => e.preventDefault()}>
                    <Label htmlFor="loc">Location</Label>
                    <SelectCell><Field id="loc" $w={127}><option>3rd PARK HOSPITAL</option></Field></SelectCell>
                    <Label htmlFor="pname">Patient Name</Label>
                    <Text id="pname" $w={313} $span />
                    <Label htmlFor="regno">Registration No</Label>
                    <Text id="regno" $w={313} $span />
                    <Label htmlFor="visit">Visit No</Label>
                    <Text id="visit" $w={313} $span />
                    <Label htmlFor="ptype">Patients Type</Label>
                    <SelectCell><Field id="ptype" $w={78}><option>All Patients</option></Field></SelectCell>
                    <Label htmlFor="from" $bold>Date From</Label>
                    <DateField id="from" />
                    <Label htmlFor="to" $bold>Date To</Label>
                    <DateField id="to" />
                    <SelectCell>
                      <FormButton $w={50}>Search</FormButton>
                      <FormButton $w={43} type="reset">Reset</FormButton>
                    </SelectCell>
                  </Form>
                  <DataTable $w="555px" $top={14} $head={15}>
                    <colgroup>
                      <col /><col style={{ width: 68 }} /><col style={{ width: 80 }} /><col style={{ width: 42 }} /><col style={{ width: 57 }} />
                    </colgroup>
                    <thead>
                      <tr><th>Patient</th><th>Department</th><th>Consultant</th><th>Status</th><th>Time(Mins)</th></tr>
                    </thead>
                    <tbody>
                      <PatientRow>
                        <PatientCell>
                          <a href="#patient">FIRST CANCER PATIENT (3PH-8121-08/2025,OPV-721-<br />1),Male,56</a>
                        </PatientCell>
                        <td>GENERAL<br />CONSULTATION</td>
                        <td>DR FRANCIS<br />OCHIENG WERE</td>
                        <td><b>Pending</b></td>
                        <td>
                          <Minutes>
                            <span>1</span>
                            <svg width="5" height="15" viewBox="0 0 5 15"><path d="M0 .500h5M0 14.500h5M2.500 0v15" stroke="#111" strokeWidth="1.400" /></svg>
                          </Minutes>
                        </td>
                      </PatientRow>
                    </tbody>
                  </DataTable>
                </Frame>

                <Frame $basis="1 1 0">
                  <FrameHead $h={27}>
                    <HeadCell $w={374} $lift={1}><b>Patient's Lab/Radiology Result List</b></HeadCell>
                    <HeadCell $lift={1}><b>Location</b> 3rd PARK HOSPITAL</HeadCell>
                  </FrameHead>
                  <Form $cols="74px 151px 51px 1fr" onSubmit={(e) => e.preventDefault()}>
                    <Label htmlFor="rloc">Location</Label>
                    <SelectCell><Field id="rloc" $w={126}><option>3rd PARK HOSPITAL</option></Field></SelectCell>
                    <Label htmlFor="rname">Patient Name</Label>
                    <Text id="rname" $w={324} $span />
                    <Label htmlFor="rreg">Reg No</Label>
                    <Text id="rreg" $w={144} />
                    <Label htmlFor="rvisit">Visit No</Label>
                    <Text id="rvisit" $w={138} />
                    <Label htmlFor="rdoc">Doctor</Label>
                    <Text id="rdoc" $w={144} $span />
                    <Label htmlFor="rfrom" $bold>Date From</Label>
                    <DateField id="rfrom" />
                    <Label htmlFor="rto" $bold>Date To</Label>
                    <DateField id="rto" />
                    <SelectCell>
                      <FormButton $w={50}>Search</FormButton>
                      <FormButton $w={43} type="reset">Reset</FormButton>
                    </SelectCell>
                  </Form>
                  <DataTable $w="600px" $top={23} $head={22}>
                    <colgroup><col style={{ width: 269 }} /><col style={{ width: 176 }} /><col /></colgroup>
                    <thead>
                      <tr><th>Patient</th><th>Department</th><th>Doctor</th></tr>
                    </thead>
                  </DataTable>
                </Frame>
              </Frames>
            </Page>
            <VerticalScroll>
              <Arrow d="M0 7h8L4 1z" />
              <VerticalThumb />
              <Arrow d="M0 1h8L4 7z" />
            </VerticalScroll>
          </Viewport>

          <HorizontalScroll>
            <Arrow d="M7 0v8L1 4z" />
            <HorizontalTrack><HorizontalThumb /></HorizontalTrack>
            <Arrow d="M1 0v8l6-4z" />
          </HorizontalScroll>

          <Taskbar>
            <Weather><MoonLogo /></Weather>
            <StartButton aria-label="Start"><WindowsLogo /></StartButton>
            <SearchBox>
              <SearchIcon size={13} strokeWidth={2.5} />
              <input placeholder="Search" aria-label="Search" />
              <OwlDrawing />
            </SearchBox>
            <Apps>
              <AppButton aria-label="Copilot"><CopilotLogo /></AppButton>
              <AppButton aria-label="Edge" $running><EdgeLogo /></AppButton>
              <AppButton aria-label="Chrome"><ChromeLogo /></AppButton>
              <AppButton aria-label="Key tool"><KeyLogo /></AppButton>
              <AppButton aria-label="Snipping tool"><SnipLogo /></AppButton>
              <AppButton aria-label="Mail"><BirdLogo /></AppButton>
              <AppButton aria-label="WPS Office" $running><WpsLogo /></AppButton>
              <AppButton aria-label="Files" $running><FolderLogo /></AppButton>
              <AppButton aria-label="Notepad" $running><NotepadLogo /></AppButton>
              <AppButton aria-label="To Do" $running><TodoLogo /><Count $color="#0f7ad6">1</Count></AppButton>
              <AppButton aria-label="WhatsApp" $running><FaWhatsapp size={23} color="#1f8f55" /><Count $color="#0f7ad6">1</Count></AppButton>
              <AppButton aria-label="Chrome window" $active><ChromeLogo /><Count $color="#7b1fa2">CS</Count></AppButton>
            </Apps>
            <Tray>
              <ChevronUp size={13} />
              <TrayIcons>
                <Mic size={14} color="#2b5f9e" />
                <Spacer $w={0} />
                <Wifi size={14} />
                <Volume2 size={14} />
                <BatteryDrawing />
              </TrayIcons>
              <TrayTime><span>7:19 PM</span><span>04-Aug-25</span></TrayTime>
            </Tray>
          </Taskbar>

          <SideSliders>
            <SidePill />
            <SidePill $filled />
          </SideSliders>
        </Desktop>

        <Presenting>
          <span>Sharma is presenting</span>
          <Minimise aria-label="Exit full screen"><MdFullscreenExit size={72} /></Minimise>
        </Presenting>

        <Controls>
          <Control $bg={PINK} $fg="#601410" $r={48} aria-label="Turn on camera"><CameraOff gap={PINK} /></Control>
          <Control $bg={PINK} $fg="#601410" $r={48} aria-label="Unmute"><MicOff filled gap={PINK} /></Control>
          <Control $bg="#333436" $fg="#e3e3e3" $r={72} aria-label="React"><Smile /></Control>
          <Control $bg="#333436" $fg="#fff" $r={72} $w={120} aria-label="More"><MdMoreVert size={72} /></Control>
          <Rule />
          <Control $bg="#dc3026" $fg="#fff" $r={72} aria-label="Leave call"><MdOutlineCallEnd size={60} /></Control>
        </Controls>

        <SystemNav>
          <SystemButton aria-label="System back">
            <svg width="50" height="54" viewBox="0 0 50 54" fill="none" stroke="#b0b0b0" strokeWidth="4" strokeLinejoin="round">
              <path d="M44 4v46L5 27z" />
            </svg>
          </SystemButton>
          <SystemButton aria-label="System home">
            <svg width="54" height="54" fill="none" stroke="#b0b0b0" strokeWidth="4.500"><circle cx="27" cy="27" r="22.700" /></svg>
          </SystemButton>
          <SystemButton aria-label="Recent apps">
            <svg width="54" height="54" fill="none" stroke="#b0b0b0" strokeWidth="4.500"><rect x="6" y="6.500" width="41.500" height="41" rx="2" /></svg>
          </SystemButton>
          <SystemButton aria-label="Pull down notifications">
            <svg width="54" height="54" fill="none" stroke="#b0b0b0" strokeWidth="4.500" strokeLinecap="round">
              <path d="M9 6.500h36M9 17.500h36M27 28v20M13 33l14 14.500L41 33" />
            </svg>
          </SystemButton>
        </SystemNav>
      </Phone>
    </>
  );
}
